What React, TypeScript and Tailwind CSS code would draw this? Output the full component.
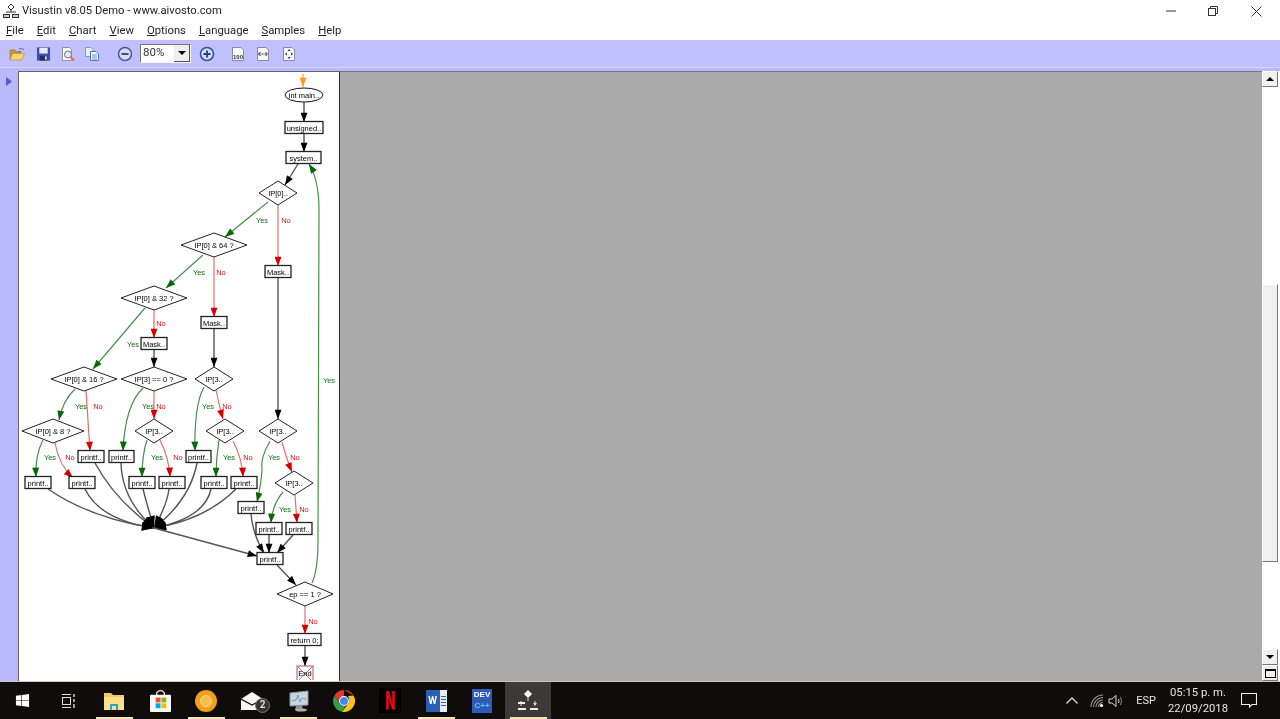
import { Fragment, type ReactNode } from "react";
import { FaWindows } from "react-icons/fa";

type EdgeColor = "black" | "green" | "red" | "orange" | "hub";

const stroke: Record<EdgeColor, string> = {
  black: "#555555",
  hub: "#555555",
  green: "#4a8f4a",
  red: "#e07070",
  orange: "#f5a623",
};

const head: Record<EdgeColor, string> = {
  black: "#000000",
  hub: "#000000",
  green: "#056805",
  red: "#d40000",
  orange: "#ff9c1a",
};

// [colour, svg path]
const edges: [EdgeColor, string][] = [
  ["orange", "M303 74 L303 87"],
  ["black", "M304 102 L304 122"],
  ["black", "M304 134 L304 152"],
  ["black", "M298 164 L285 185"],
  ["green", "M268 202 L225 237"],
  ["red", "M278 205 L278 266"],
  ["black", "M278 278 L278 419"],
  ["green", "M203 255 L166 288"],
  ["red", "M214 257 L214 317"],
  ["black", "M214 329 L214 367"],
  ["green", "M145 308 L93 369"],
  ["red", "M154 310 L154 338"],
  ["black", "M154 350 L154 367"],
  ["green", "M75 389 Q63 400 59 420"],
  ["red", "M86 390 Q88 420 90 451"],
  ["green", "M143 388 Q125 405 123 451"],
  ["red", "M154 391 L154 419"],
  ["green", "M204 387 Q194 405 195 451"],
  ["red", "M216 390 Q219 405 223 419"],
  ["green", "M43 440 Q35 455 36 477"],
  ["red", "M55 443 Q59 465 73 478"],
  ["green", "M147 440 Q142 455 142 477"],
  ["red", "M160 440 Q169 458 170 477"],
  ["green", "M219 440 Q216 458 216 477"],
  ["red", "M233 441 Q242 458 243 477"],
  ["green", "M270 441 Q260 458 262 470 Q261 485 257 502"],
  ["red", "M282 442 Q286 458 292 472"],
  ["green", "M283 492 Q272 505 271 523"],
  ["red", "M295 495 L297 523"],
  ["hub", "M48 489 Q90 518 154 528"],
  ["hub", "M85 489 Q100 520 154 528"],
  ["hub", "M95 463 Q115 500 154 528"],
  ["hub", "M121 463 Q122 500 154 528"],
  ["hub", "M143 489 Q147 505 154 528"],
  ["hub", "M169 489 Q167 505 154 528"],
  ["hub", "M197 463 Q190 500 154 528"],
  ["hub", "M211 489 Q205 518 154 528"],
  ["hub", "M236 489 Q205 520 154 528"],
  ["black", "M154 528 L257 556"],
  ["black", "M251 514 Q253 535 264 553"],
  ["black", "M269 535 L269 553"],
  ["black", "M293 535 L277 553"],
  ["black", "M277 565 L296 585"],
  ["green", "M312 583 Q318 570 318 540 L319 210 Q319 180 309 164"],
  ["red", "M305 606 L305 634"],
  ["black", "M305 646 L305 666"],
];

// x, y, w, h, label
const boxes: [number, number, number, number, string][] = [
  [285, 122, 38, 12, "unsigned.."],
  [286, 152, 35, 12, "system.."],
  [265, 266, 26, 12, "Mask.."],
  [201, 317, 26, 12, "Mask.."],
  [141, 338, 26, 12, "Mask.."],
  [78, 451, 26, 12, "printf.."],
  [109, 451, 25, 12, "printf.."],
  [186, 451, 25, 12, "printf.."],
  [25, 477, 26, 12, "printf.."],
  [69, 477, 26, 12, "printf.."],
  [129, 477, 26, 12, "printf.."],
  [159, 477, 26, 12, "printf.."],
  [201, 477, 26, 12, "printf.."],
  [231, 477, 26, 12, "printf.."],
  [238, 502, 26, 12, "printf.."],
  [256, 523, 26, 12, "printf.."],
  [286, 523, 26, 12, "printf.."],
  [257, 553, 26, 12, "printf.."],
  [288, 634, 33, 12, "return 0;"],
];

// cx, cy, rx, label
const diamonds: [number, number, number, string][] = [
  [278, 193, 19, "IP[0].."],
  [214, 245, 33, "IP[0] & 64 ?"],
  [154, 298, 33, "IP[0] & 32 ?"],
  [84, 379, 33, "IP[0] & 16 ?"],
  [154, 379, 33, "IP[3] == 0 ?"],
  [214, 379, 19, "IP[3.."],
  [53, 431, 31, "IP[0] & 8 ?"],
  [154, 431, 19, "IP[3.."],
  [225, 431, 19, "IP[3.."],
  [278, 431, 19, "IP[3.."],
  [294, 483, 19, "IP[3.."],
  [305, 594, 28, "ep == 1 ?"],
];

const yesLabels = [
  [262, 220], [199, 272], [133, 344], [329, 380], [81, 406], [148, 406], [208, 406],
  [50, 457], [157, 457], [229, 457], [274, 457], [285, 509],
];

const noLabels = [
  [286, 220], [221, 272], [161, 323], [98, 406], [161, 406], [227, 406],
  [70, 457], [178, 457], [248, 457], [295, 457], [304, 509], [313, 621],
];

const menus = ["File", "Edit", "Chart", "View", "Options", "Language", "Samples", "Help"];

function FlowChart() {
  return (
    <svg viewBox="19 72 320 608" className="block h-[608px] w-[320px] font-['Liberation_Sans',sans-serif]">
      <defs>
        {(Object.keys(head) as EdgeColor[]).map((c) => (
          <marker
            key={c}
            id={`arrow-${c}`}
            viewBox="0 0 8 6"
            refX="8"
            refY="3"
            markerUnits="userSpaceOnUse"
            markerWidth={c === "hub" ? 14 : 10}
            markerHeight={c === "hub" ? 9 : 7}
            orient="auto"
          >
            <path d="M0 0 L8 3 L0 6 Z" fill={head[c]} />
          </marker>
        ))}
      </defs>
      {edges.map(([c, d], i) => (
        <path key={i} d={d} fill="none" stroke={stroke[c]} strokeWidth={c === "black" || c === "hub" ? 1.4 : 1.2} markerEnd={`url(#arrow-${c})`} />
      ))}
      <ellipse cx="304" cy="95" rx="19" ry="7" fill="#fff" stroke="#111" />
      <text x="304" y="98" fontSize="7.5" textAnchor="middle" fill="#000">int main..</text>
      {boxes.map(([x, y, w, h, label], i) => (
        <Fragment key={i}>
          <rect x={x} y={y - 0.5} width={w} height={h} fill="#fff" stroke="#222" strokeWidth="1.3" />
          <text x={x + w / 2} y={y + 8.5} fontSize="7.5" textAnchor="middle" fill="#000">{label}</text>
        </Fragment>
      ))}
      {diamonds.map(([cx, cy, rx, label], i) => (
        <Fragment key={i}>
          <path d={`M${cx - rx} ${cy} L${cx} ${cy - 12} L${cx + rx} ${cy} L${cx} ${cy + 12} Z`} fill="#fff" stroke="#222" />
          <text x={cx} y={cy + 3} fontSize="7.5" textAnchor="middle" fill="#000">{label}</text>
        </Fragment>
      ))}
      {yesLabels.map(([x, y], i) => (
        <text key={i} x={x} y={y + 3} fontSize="7.5" textAnchor="middle" fill="#107010">Yes</text>
      ))}
      {noLabels.map(([x, y], i) => (
        <text key={i} x={x} y={y + 3} fontSize="7.5" textAnchor="middle" fill="#d01010">No</text>
      ))}
      <rect x="297" y="666" width="16" height="16" fill="#fff" stroke="#c04a4a" />
      <path d="M297 666 L313 682 M313 666 L297 682" stroke="#d07070" />
      <text x="305" y="676" fontSize="7.5" textAnchor="middle" fill="#000">End</text>
    </svg>
  );
}

function AppIcon() {
  return (
    <svg viewBox="0 0 16 16" className="h-4 w-4">
      <path d="M8 1 L11 4 L8 7 L5 4 Z" fill="none" stroke="#333" />
      <path d="M8 7 V9 M3 9 H13" stroke="#333" fill="none" />
      <rect x="0.5" y="11.5" width="6" height="3" fill="#ccc" stroke="#333" />
      <rect x="9.5" y="11.5" width="6" height="3" fill="#ccc" stroke="#333" />
    </svg>
  );
}

function ToolIcon({ ml, w = 16, children }: { ml: string; w?: number; children: ReactNode }) {
  return (
    <span className={`${ml} flex shrink-0 items-center justify-center`} style={{ width: w }}>
      <svg viewBox="0 0 16 16" width={w} height={16}>{children}</svg>
    </span>
  );
}

function ZoomCircle({ plus }: { plus?: boolean }) {
  return (
    <>
      <circle cx="8" cy="8" r="6.5" fill={plus ? "#d5dcfb" : "#d8d8f4"} stroke={plus ? "#2f4f9f" : "#4a5a90"} strokeWidth="1.5" />
      <path d={plus ? "M4.5 8 H11.5 M8 4.5 V11.5" : "M4.5 8 H11.5"} stroke="#24407f" strokeWidth="1.8" />
    </>
  );
}

function PageIcon({ children }: { children: ReactNode }) {
  return (
    <>
      <path d="M2.5 1.5 H11 L13.5 4 V14.5 H2.5 Z" fill="#f7f7fb" stroke="#8a8aa8" />
      {children}
    </>
  );
}

function Toolbar() {
  return (
    <div className="flex h-[28px] items-center border-b border-[#d8d8fc] bg-[#c0c0ff]">
      <ToolIcon ml="ml-[9px]">
        <path d="M1 4 H6 L7.5 5.5 H12 V7 H4 L1 14 Z" fill="#c9983a" stroke="#8a6a24" strokeWidth="0.6" />
        <path d="M3.5 7.5 H15.5 L12.5 14 H1 Z" fill="#f4d67a" stroke="#b08a30" strokeWidth="0.6" />
        <path d="M10 3 Q13 1 15 4" fill="none" stroke="#4a70b0" strokeWidth="1" />
      </ToolIcon>
      <ToolIcon ml="ml-[11px]" w={15}>
        <rect x="1" y="1" width="14" height="14" fill="#3a4fb0" />
        <rect x="3.5" y="1.5" width="9" height="6" fill="#e8e8f4" />
        <rect x="4" y="10" width="8" height="5" fill="#2a2a5a" />
        <rect x="9.5" y="10.5" width="2" height="3.5" fill="#d8d8e8" />
      </ToolIcon>
      <ToolIcon ml="ml-[9px]">
        <path d="M2.5 1.5 H9.5 L11.5 3.5 V14.5 H2.5 Z" fill="#fafafa" stroke="#9090a8" />
        <circle cx="8" cy="8.5" r="3.5" fill="#dfe9f5" stroke="#707088" />
        <path d="M10.5 11 L14 14.5" stroke="#e07a20" strokeWidth="2" />
      </ToolIcon>
      <ToolIcon ml="ml-[8px]">
        <path d="M1.5 1.5 H7 L9 3.5 V10.5 H1.5 Z" fill="#e9eefa" stroke="#7f9ccf" />
        <path d="M6.5 5.5 H12 L14.5 8 V14.5 H6.5 Z" fill="#f4f7fd" stroke="#4b78c0" />
        <path d="M8 9 H13 M8 11 H13 M8 13 H13" stroke="#4b78c0" strokeWidth="0.8" />
      </ToolIcon>
      <ToolIcon ml="ml-[17px]"><ZoomCircle /></ToolIcon>
      <div className="ml-[7px] flex h-[19px] w-[51px] items-stretch border border-[#f4f4f4] border-t-[#777] border-l-[#777] bg-white pl-[2px] font-['Roboto',sans-serif] text-[11.5px] leading-[15px] text-[#333]">
        <span className="flex-1">80%</span>
        <span className="flex w-[16px] items-center justify-center border-r border-b border-[#555] bg-[#eeeeee]">
          <svg viewBox="0 0 8 4" className="h-[4px] w-[8px]"><path d="M0 0 H8 L4 4 Z" fill="#000" /></svg>
        </span>
      </div>
      <ToolIcon ml="ml-[8px]"><ZoomCircle plus /></ToolIcon>
      <ToolIcon ml="ml-[15px]">
        <PageIcon>
          <text x="8" y="13" fontSize="6" fontWeight="bold" textAnchor="middle" fill="#333" className="font-['Liberation_Sans',sans-serif]">100</text>
        </PageIcon>
      </ToolIcon>
      <ToolIcon ml="ml-[9px]">
        <PageIcon>
          <path d="M3.5 8 H12.5" stroke="#333" strokeWidth="1" strokeDasharray="2 1" />
          <path d="M5.5 6 L3.5 8 L5.5 10 M10.5 6 L12.5 8 L10.5 10" fill="none" stroke="#333" />
        </PageIcon>
      </ToolIcon>
      <ToolIcon ml="ml-[10px]">
        <PageIcon>
          <path d="M8 3 L6.5 5 H9.5 Z M8 13 L6.5 11 H9.5 Z M4 8 L6 6.5 V9.5 Z M12 8 L10 6.5 V9.5 Z" fill="#333" />
        </PageIcon>
      </ToolIcon>
    </div>
  );
}

function Scrollbar() {
  const btn = "flex h-[16px] w-[16px] items-center justify-center border-t border-l border-t-white border-l-white border-r border-b border-r-[#777] border-b-[#777] bg-[#f0f0f0]";
  return (
    <div className="flex w-[18px] flex-col bg-white">
      <div className={btn}>
        <svg viewBox="0 0 8 4" className="h-[4px] w-[8px]"><path d="M0 4 H8 L4 0 Z" fill="#000" /></svg>
      </div>
      <div className="h-[197px]" />
      <div className="h-[278px] w-[16px] border-t border-l border-t-white border-l-white border-r border-b border-r-[#777] border-b-[#777] bg-[#f0f0f0]" />
      <div className="flex-1" />
      <div className={btn}>
        <svg viewBox="0 0 8 4" className="h-[4px] w-[8px]"><path d="M0 0 H8 L4 4 Z" fill="#000" /></svg>
      </div>
      <div className={btn}>
        <span className="h-[9px] w-[11px] border border-t-2 border-black" />
      </div>
    </div>
  );
}

function TaskCell({ open, active, children }: { open?: boolean; active?: boolean; children: ReactNode }) {
  return (
    <div className={`relative flex h-full w-[46px] items-center justify-center ${active ? "bg-[#3b3a39]" : ""}`}>
      {children}
      {open ? <span className="absolute bottom-0 left-[5px] h-[2px] w-[37px] bg-[#f3e3bd]" /> : null}
    </div>
  );
}

function Taskbar() {
  return (
    <div className="flex h-[38px] items-center border-t border-[#c8c8c8] bg-[#0f0c0b] font-['Roboto',sans-serif] text-[#e6e6e6]">
      <div className="flex h-full w-[45px] items-center justify-center">
        <FaWindows className="h-[15px] w-[15px] text-white" />
      </div>
      <TaskCell>
        <svg viewBox="0 0 16 16" className="h-4 w-4" fill="none" stroke="#ddd">
          <path d="M2 1.5 H11 M2 14.5 H11" />
          <rect x="2.5" y="4.5" width="8" height="7" />
          <path d="M14 1 V4 M14 6 V9 M14 11 V15" strokeWidth="1.4" />
        </svg>
      </TaskCell>
      <TaskCell open>
        <svg viewBox="0 0 22 20" className="h-[20px] w-[22px]">
          <path d="M1 2 H8 L10 4 H21 V19 H1 Z" fill="#f4c95f" />
          <path d="M1 6 H21 V19 H1 Z" fill="#fbe08c" />
          <path d="M7 19 V13 H15 V19 H13 V15 H9 V19 Z" fill="#2aa3c8" />
        </svg>
      </TaskCell>
      <TaskCell>
        <svg viewBox="0 0 22 24" className="h-[23px] w-[21px]">
          <path d="M7 7 V4 Q11 -1 15 4 V7" fill="none" stroke="#ddd" strokeWidth="1.5" />
          <rect x="0" y="6" width="22" height="18" rx="1" fill="#f5f5f5" />
          <rect x="6" y="9" width="5" height="5" fill="#f25022" />
          <rect x="12" y="9" width="5" height="5" fill="#7fba00" />
          <rect x="6" y="15" width="5" height="5" fill="#00a4ef" />
          <rect x="12" y="15" width="5" height="5" fill="#ffb900" />
        </svg>
      </TaskCell>
      <TaskCell open>
        <svg viewBox="0 0 22 22" className="h-[22px] w-[22px]">
          <circle cx="11" cy="11" r="11" fill="#f2a01c" />
          <circle cx="11" cy="11" r="5.5" fill="#f7bf4e" stroke="#fbd98a" />
        </svg>
      </TaskCell>
      <TaskCell>
        <span className="relative flex">
          <svg viewBox="0 0 22 18" className="h-[18px] w-[22px]">
            <path d="M0 7 L11 0 L22 7 V18 H0 Z" fill="#f7f7f7" />
            <path d="M0 7 L11 13 L22 7" fill="none" stroke="#0f0c0b" strokeWidth="1.2" />
          </svg>
          <span className="absolute top-[6px] left-[14px] flex h-[15px] w-[15px] items-center justify-center rounded-full border border-[#777] bg-[#333] text-[10px] font-bold leading-none text-[#ddd]">2</span>
        </span>
      </TaskCell>
      <TaskCell open>
        <svg viewBox="0 0 22 22" className="h-[22px] w-[22px]">
          <path d="M3 3 L21 1 V15 L3 16 Z" fill="#c9d3dc" stroke="#8a97a3" />
          <path d="M5 11 L9 10 L11 5 L13 12 L15 8 L19 9" fill="none" stroke="#6aa0c8" />
          <path d="M9 16 L15 16 L16 19 L8 20 Z" fill="#8d9298" />
          <ellipse cx="14" cy="20" rx="6" ry="1.6" fill="#aab0b6" />
        </svg>
      </TaskCell>
      <TaskCell>
        <svg viewBox="0 0 22 22" className="h-[22px] w-[22px]">
          <path d="M11 0 A11 11 0 0 1 20.5 5.5 L11 5.5 Z M11 0 A11 11 0 0 0 1.5 5.5 L6 13 L11 5.5 H20.5 Z" fill="#e0362c" />
          <path d="M1.5 5.5 A11 11 0 0 0 9 21.8 L13.5 14 L11 16 Q7.5 16 6 13 Z" fill="#2fa04a" />
          <path d="M20.5 5.5 A11 11 0 0 1 9 21.8 L15.7 13 Q17 9 15 6 Z" fill="#fbc116" />
          <circle cx="11" cy="11" r="5" fill="#fff" />
          <circle cx="11" cy="11" r="4" fill="#4a85ee" />
        </svg>
      </TaskCell>
      <TaskCell>
        <span className="flex h-[25px] w-[22px] items-center justify-center bg-black">
          <svg viewBox="0 0 10 22" className="h-[19px] w-[9px]">
            <path d="M0 0 H3 L7 14 V0 H10 V22 L7 21 L3 9 V21 L0 22 Z" fill="#e50914" />
          </svg>
        </span>
      </TaskCell>
      <TaskCell open>
        <span className="flex h-[22px] w-[21px] items-center bg-[#e8edf5]">
          <span className="flex h-[22px] w-[14px] items-center justify-center bg-[#2b5fb4] text-[10px] font-bold text-white">W</span>
          <span className="ml-[1px] flex flex-col gap-[2px]">
            <span className="h-[1px] w-[5px] bg-[#2b5fb4]" />
            <span className="h-[1px] w-[5px] bg-[#2b5fb4]" />
            <span className="h-[1px] w-[5px] bg-[#2b5fb4]" />
            <span className="h-[1px] w-[5px] bg-[#2b5fb4]" />
          </span>
        </span>
      </TaskCell>
      <TaskCell>
        <span className="flex h-[24px] w-[20px] flex-col items-center bg-[#2f5cb8] font-['Liberation_Sans',sans-serif] text-[8px] font-bold leading-[11px]">
          <span className="text-white">DEV</span>
          <span className="text-[#5ac8f0]">C++</span>
        </span>
      </TaskCell>
      <TaskCell open active>
        <svg viewBox="0 0 22 24" className="h-[24px] w-[22px]">
          <path d="M11 1 L15 5 L11 9 L7 5 Z" fill="#fff" />
          <path d="M11 9 V12" stroke="#ddd" />
          <path d="M4 12 V17 M18 12 V16" stroke="#ddd" />
          <path d="M1 14 H8 M1 20 H9 M13 20 H21" stroke="#eee" strokeWidth="2" />
          <path d="M16 14 L18 17 L20 14 Z" fill="#ddd" />
        </svg>
      </TaskCell>
      <div className="flex-1" />
      <svg viewBox="0 0 12 7" className="mr-[12px] h-[7px] w-[12px]" fill="none" stroke="#ddd" strokeWidth="1.3">
        <path d="M0.5 6.5 L6 1 L11.5 6.5" />
      </svg>
      <svg viewBox="0 0 14 14" className="mr-[4px] h-[14px] w-[14px]" fill="none" stroke="#9a9a9a" strokeWidth="1.1">
        <path d="M1 13 A12 12 0 0 1 13 1 M3.5 13 A9.5 9.5 0 0 1 13 3.5 M6 13 A7 7 0 0 1 13 6 M8.5 13 A4.5 4.5 0 0 1 13 8.5" />
        <circle cx="11.5" cy="11.5" r="1.6" fill="#fff" stroke="none" />
      </svg>
      <svg viewBox="0 0 16 14" className="mr-[12px] h-[14px] w-[16px]" fill="none" stroke="#ddd" strokeWidth="1">
        <path d="M1 5 H4 L8 1.5 V12.5 L4 9 H1 Z" />
        <path d="M10.5 5 Q11.5 7 10.5 9" />
        <path d="M12.5 3 Q14.5 7 12.5 11" stroke="#888" />
      </svg>
      <span className="mr-[14px] text-[11px] leading-none">ESP</span>
      <div className="mr-[15px] flex w-[56px] flex-col items-center text-[11.3px] leading-[16px]">
        <span className="whitespace-nowrap">05:15 p. m.</span>
        <span className="whitespace-nowrap">22/09/2018</span>
      </div>
      <svg viewBox="0 0 16 15" className="mr-[23px] h-[15px] w-[16px]" fill="none" stroke="#eee" strokeWidth="1.1">
        <path d="M0.5 0.5 H15.5 V11.5 H11 L8.5 14 V11.5 H0.5 Z" />
      </svg>
    </div>
  );
}

export default function App() {
  return (
    <div className="flex h-[719px] w-[1280px] flex-col overflow-hidden bg-white font-['Roboto',sans-serif] text-black blur-[0.35px]">
      <div className="flex h-[22px] items-center pl-[3px] text-[11.2px] text-[#222]">
        <AppIcon />
        <span className="ml-[3px] whitespace-nowrap">Visustin v8.05 Demo - www.aivosto.com</span>
        <div className="ml-auto flex items-center text-[#333]">
          <svg viewBox="0 0 10 2" className="mr-[32px] h-[2px] w-[10px]"><path d="M0 1 H10" stroke="#333" strokeWidth="1" /></svg>
          <svg viewBox="0 0 10 10" className="mr-[33px] h-[10px] w-[10px]" fill="none" stroke="#333">
            <rect x="0.5" y="2.5" width="7" height="7" />
            <path d="M2.5 2.5 V0.5 H9.5 V7.5 H7.5" />
          </svg>
          <svg viewBox="0 0 11 11" className="mr-[18px] h-[11px] w-[11px]" fill="none" stroke="#333">
            <path d="M0.5 0.5 L10.5 10.5 M10.5 0.5 L0.5 10.5" />
          </svg>
        </div>
      </div>
      <div className="flex h-[18px] items-center gap-[13px] pl-[6px] text-[11.3px] text-[#222]">
        {menus.map((m) => (
          <span key={m}>
            <span className="underline">{m[0]}</span>
            {m.slice(1)}
          </span>
        ))}
      </div>
      <Toolbar />
      <div className="flex min-h-0 flex-1 bg-[#b9b9fb]">
        <div className="flex w-[18px] justify-center pt-[9px]">
          <svg viewBox="0 0 6 9" className="h-[9px] w-[6px]"><path d="M0 0 L6 4.5 L0 9 Z" fill="#5a5ac8" /></svg>
        </div>
        <div className="mt-[3px] w-[322px] border-t border-l border-r border-t-[#666] border-l-[#666] border-r-[#333] bg-white">
          <FlowChart />
        </div>
        <div className="mt-[3px] flex-1 border-t border-[#777] bg-[#aaaaaa]" />
        <div className="mt-[3px] flex">
          <Scrollbar />
        </div>
      </div>
      <Taskbar />
    </div>
  );
}
